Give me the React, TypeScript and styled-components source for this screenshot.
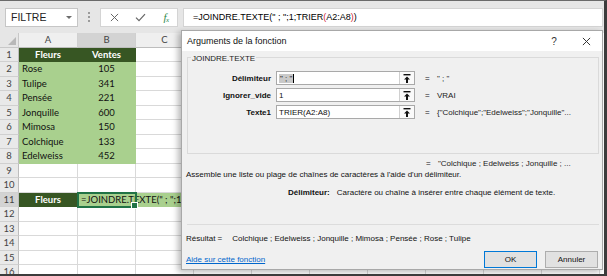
import React from 'react';
import styled, { createGlobalStyle } from 'styled-components';

const GlobalStyle = createGlobalStyle`
  * { box-sizing: border-box; }
  html, body { margin: 0; padding: 0; background: #3c3c3c; }
`;

const Ecran = styled.div`
  position: relative;
  width: 607px;
  height: 276px;
  overflow: hidden;
  background: #fff;
  border-top: 1px solid #6a6a6a;
  border-right: 3px solid #3c3c3c;
  border-bottom: 2px solid #3c3c3c;
`;

/* ---------- barre de formule ---------- */

const Barre = styled.div`
  display: flex;
  align-items: center;
  height: 32px;
  padding: 0 1px 0 5px;
  background: #e6e6e6;
  font-family: 'Liberation Sans', Arial, sans-serif;
`;

const NomBox = styled.div`
  display: flex;
  align-items: center;
  justify-content: space-between;
  width: 73px;
  height: 19px;
  padding: 0 5px 0 5px;
  background: #fff;
  border: 1px solid #c6c6c6;
  font-size: 10.5px;
  color: #222;
`;

const Triangle = styled.span`
  width: 0;
  height: 0;
  border-left: 3px solid transparent;
  border-right: 3px solid transparent;
  border-top: 3px solid #6d6d6d;
`;

const Points = styled.div`
  display: flex;
  flex-direction: column;
  align-items: center;
  gap: 2px;
  width: 22px;
`;

const Point = styled.span`
  width: 2px;
  height: 2px;
  background: #9b9b9b;
`;

const BoutonsBox = styled.div`
  display: grid;
  grid-template-columns: repeat(3, 26px);
  align-items: center;
  justify-items: center;
  width: 78px;
  height: 19px;
  background: #fff;
  border: 1px solid #d4d4d4;
`;

const Fx = styled.span`
  font-family: 'Liberation Serif', serif;
  font-style: italic;
  font-size: 11px;
  color: #2f8a4a;
  letter-spacing: -0.5px;

  sub {
    font-size: 7px;
    vertical-align: -1px;
  }
`;

const FormuleBox = styled.div`
  flex: 1;
  display: flex;
  align-items: center;
  height: 19px;
  margin-left: 5px;
  padding-left: 9px;
  background: #fff;
  border: 1px solid #d4d4d4;
  font-size: 9px;
  color: #000;
  white-space: nowrap;
`;

const Paren = styled.span`
  color: #d0273a;
`;

/* ---------- grille ---------- */

const Grille = styled.div`
  display: grid;
  grid-template-columns: 19px 59px 58px repeat(8, 58px);
  grid-auto-rows: 14.5px;
  font-family: Lato, 'Liberation Sans', sans-serif;
  font-size: 9.5px;
`;

const Coin = styled.div`
  position: relative;
  background: #e6e6e6;
  border-right: 1px solid #c8c8c8;
  border-bottom: 1px solid #c8c8c8;

  &::after {
    content: '';
    position: absolute;
    right: 2px;
    bottom: 2px;
    border-left: 8px solid transparent;
    border-bottom: 8px solid #b8b8b8;
  }
`;

const EnteteCol = styled.div<{ $sel?: boolean }>`
  display: flex;
  align-items: center;
  justify-content: center;
  background: ${p => (p.$sel ? '#d3d3d3' : '#efefef')};
  border-right: 1px solid #d0d0d0;
  border-bottom: 1px solid #bdbdbd;
  color: #444;
`;

const EnteteLigne = styled.div<{ $sel?: boolean }>`
  display: flex;
  align-items: center;
  justify-content: center;
  background: ${p => (p.$sel ? '#d3d3d3' : '#e9e9e9')};
  border-right: 1px solid #bdbdbd;
  border-bottom: 1px solid #d0d0d0;
  color: #444;
`;

const Cellule = styled.div<{ $fond?: string; $gras?: boolean; $centre?: boolean }>`
  display: flex;
  align-items: center;
  justify-content: ${p => (p.$centre ? 'center' : 'flex-start')};
  padding: 0 3px;
  background: ${p => p.$fond ?? '#fff'};
  border-right: 1px solid ${p => p.$fond ?? '#d9d9d9'};
  border-bottom: 1px solid ${p => p.$fond ?? '#d9d9d9'};
  font-weight: ${p => (p.$gras ? 700 : 400)};
  color: ${p => (p.$fond === VERT_FONCE ? '#fff' : '#111')};
  white-space: nowrap;
`;

const CelluleActive = styled(Cellule)`
  position: relative;
  z-index: 1;
  overflow: visible;
  outline: 2px solid #217346;
  outline-offset: -1px;

  &::after {
    content: '';
    position: absolute;
    right: -3px;
    bottom: -3px;
    width: 5px;
    height: 5px;
    background: #217346;
    border: 1px solid #fff;
  }
`;

/* ---------- boîte de dialogue ---------- */

const Dialogue = styled.div`
  position: absolute;
  left: 181px;
  top: 29px;
  width: 422px;
  height: 240px;
  display: flex;
  flex-direction: column;
  background: #f0f0f0;
  border: 1px solid #a8a8a8;
  box-shadow: -3px 2px 6px rgba(0, 0, 0, 0.28);
  font-family: 'Liberation Sans', Arial, sans-serif;
  font-size: 8px;
  color: #111;
  z-index: 5;
`;

const Titre = styled.div`
  display: flex;
  align-items: center;
  height: 20px;
  padding-left: 5px;
  background: #fff;
  font-size: 9px;
  color: #111;
`;

const TitreTexte = styled.span`
  flex: 1;
`;

const TitreBouton = styled.span`
  display: flex;
  align-items: center;
  justify-content: center;
  width: 32px;
  height: 20px;
  font-size: 10px;
  color: #333;
`;

const Groupe = styled.div`
  height: 97px;
  margin: 6px 3px 0 5px;
  border: 1px solid #dadada;
`;

const Legende = styled.div`
  width: fit-content;
  margin: -4px 0 0 3px;
  padding: 0 1px;
  line-height: 10px;
  background: #f0f0f0;
  font-size: 8px;
  color: #222;
`;

const Arguments = styled.div`
  display: flex;
  flex-direction: column;
  gap: 3px;
  margin-top: 7px;
`;

const Ligne = styled.div`
  display: flex;
  align-items: center;
  height: 14px;
`;

const Etiquette = styled.span`
  width: 83px;
  margin-right: 5px;
  text-align: right;
  font-weight: 700;
`;

const Champ = styled.div`
  display: flex;
  align-items: stretch;
  width: 139px;
  height: 14px;
  background: #fff;
  border: 1px solid #a9a9a9;
`;

const ChampTexte = styled.span`
  flex: 1;
  display: flex;
  align-items: center;
  padding-left: 2px;
  white-space: nowrap;
`;

const Selection = styled.span`
  background: #c9c9c9;
  padding: 0 1px;
`;

const Curseur = styled.span`
  width: 1px;
  height: 9px;
  background: #000;
`;

const BoutonReduire = styled.span`
  display: flex;
  align-items: center;
  justify-content: center;
  width: 15px;
  border-left: 1px solid #d0d0d0;
  background: #fafafa;
`;

const Egal = styled.span<{ $sansMarge?: boolean }>`
  width: 12px;
  margin-left: ${p => (p.$sansMarge ? 0 : 10)}px;
`;

const Valeur = styled.span`
  white-space: nowrap;
  color: #222;
`;

const LigneResultat = styled.div`
  display: flex;
  align-items: center;
  height: 11px;
  margin-top: 4px;
  padding-left: 244px;
  white-space: nowrap;
`;

const Description = styled.div`
  height: 11px;
  line-height: 11px;
  padding-left: 4px;
  white-space: nowrap;
`;

const AideArgument = styled.div`
  display: flex;
  align-items: center;
  gap: 7px;
  height: 11px;
  margin-top: 7px;
  padding-left: 106px;
  white-space: nowrap;

  b {
    font-weight: 700;
  }
`;

const Separateur = styled.div`
  margin: 26px 3px 0 5px;
  border-top: 1px solid #dcdcdc;
`;

const Resultat = styled.div`
  display: flex;
  align-items: center;
  gap: 10px;
  height: 11px;
  margin-top: 8px;
  padding-left: 4px;
  white-space: nowrap;
`;

const Pied = styled.div`
  display: flex;
  align-items: center;
  height: 18px;
  margin-top: 6px;
  padding: 0 4px 0 4px;
`;

const Lien = styled.a`
  flex: 1;
  color: #0066cc;
  text-decoration: underline;
`;

const Bouton = styled.button<{ $focus?: boolean }>`
  width: 53px;
  height: 17px;
  margin-left: 8px;
  padding: 0;
  background: #e1e1e1;
  border: 1px solid ${p => (p.$focus ? '#0078d7' : '#adadad')};
  font-family: inherit;
  font-size: 8px;
  color: #111;
`;

const VERT_FONCE = '#375623';
const VERT_CLAIR = '#a9d08e';

const donnees: [string, string][] = [
  ['Rose', '105'],
  ['Tulipe', '341'],
  ['Pensée', '221'],
  ['Jonquille', '600'],
  ['Mimosa', '150'],
  ['Colchique', '133'],
  ['Edelweiss', '452'],
];

// only A-C are visible; the other columns sit under the dialog
const colonnes = ['A', 'B', 'C', '', '', '', '', '', '', ''];

function IconeReduire() {
  return (
    <svg width="8" height="9" viewBox="0 0 8 9">
      <rect x="0.5" y="0" width="7" height="1.4" fill="#111" />
      <path d="M4 2.4 L1 5.4 H3 V9 H5 V5.4 H7 Z" fill="#111" />
    </svg>
  );
}

function Croix({ taille, couleur }: { taille: number; couleur: string }) {
  return (
    <svg width={taille} height={taille} viewBox="0 0 10 10">
      <path d="M1 1 L9 9 M9 1 L1 9" stroke={couleur} strokeWidth="1.1" fill="none" />
    </svg>
  );
}

function Coche() {
  return (
    <svg width="11" height="9" viewBox="0 0 11 9">
      <path d="M1 4.6 L4 7.6 L10 1.2" stroke="#666" strokeWidth="1.2" fill="none" />
    </svg>
  );
}

function Feuille() {
  const lignes = [];
  for (let n = 1; n <= 16; n++) {
    const cellules = [];
    if (n === 1) {
      cellules.push(<Cellule key="a" $fond={VERT_FONCE} $gras $centre>Fleurs</Cellule>);
      cellules.push(<Cellule key="b" $fond={VERT_FONCE} $gras $centre>Ventes</Cellule>);
    } else if (n <= 8) {
      const [fleur, vente] = donnees[n - 2];
      cellules.push(<Cellule key="a" $fond={VERT_CLAIR}>{fleur}</Cellule>);
      cellules.push(<Cellule key="b" $fond={VERT_CLAIR} $centre>{vente}</Cellule>);
    } else if (n === 11) {
      cellules.push(<Cellule key="a" $fond={VERT_FONCE} $gras $centre>Fleurs</Cellule>);
      cellules.push(
        <CelluleActive key="b" $fond={VERT_CLAIR}>=JOINDRE.TEXTE(" ; ";1;</CelluleActive>
      );
    } else {
      cellules.push(<Cellule key="a" />);
      cellules.push(<Cellule key="b" />);
    }
    for (let c = 2; c < colonnes.length; c++) {
      cellules.push(<Cellule key={c} $fond={n === 11 && c === 2 ? VERT_CLAIR : undefined} />);
    }
    lignes.push(
      <React.Fragment key={n}>
        <EnteteLigne $sel={n === 11}>{n}</EnteteLigne>
        {cellules}
      </React.Fragment>
    );
  }

  return (
    <Grille>
      <Coin />
      {colonnes.map((c, i) => (
        <EnteteCol key={i} $sel={c === 'B'}>{c}</EnteteCol>
      ))}
      {lignes}
    </Grille>
  );
}

function ArgumentsFonction() {
  return (
    <Dialogue>
      <Titre>
        <TitreTexte>Arguments de la fonction</TitreTexte>
        <TitreBouton>?</TitreBouton>
        <TitreBouton><Croix taille={9} couleur="#333" /></TitreBouton>
      </Titre>

      <Groupe>
        <Legende>JOINDRE.TEXTE</Legende>
        <Arguments>
          <Ligne>
            <Etiquette>Délimiteur</Etiquette>
            <Champ>
              <ChampTexte><Selection>" ; "</Selection><Curseur /></ChampTexte>
              <BoutonReduire><IconeReduire /></BoutonReduire>
            </Champ>
            <Egal>=</Egal>
            <Valeur>" ; "</Valeur>
          </Ligne>
          <Ligne>
            <Etiquette>Ignorer_vide</Etiquette>
            <Champ>
              <ChampTexte>1</ChampTexte>
              <BoutonReduire><IconeReduire /></BoutonReduire>
            </Champ>
            <Egal>=</Egal>
            <Valeur>VRAI</Valeur>
          </Ligne>
          <Ligne>
            <Etiquette>Texte1</Etiquette>
            <Champ>
              <ChampTexte>TRIER(A2:A8)</ChampTexte>
              <BoutonReduire><IconeReduire /></BoutonReduire>
            </Champ>
            <Egal>=</Egal>
            <Valeur>{'{"Colchique";"Edelweiss";"Jonquille"...'}</Valeur>
          </Ligne>
        </Arguments>
      </Groupe>

      <LigneResultat>
        <Egal $sansMarge>=</Egal>
        <Valeur>"Colchique ; Edelweiss ; Jonquille ; ...</Valeur>
      </LigneResultat>
      <Description>Assemble une liste ou plage de chaînes de caractères à l'aide d'un délimiteur.</Description>
      <AideArgument>
        <b>Délimiteur:</b>
        <span>Caractère ou chaîne à insérer entre chaque élément de texte.</span>
      </AideArgument>

      <Separateur />

      <Resultat>
        <span>Résultat =</span>
        <span>Colchique ; Edelweiss ; Jonquille ; Mimosa ; Pensée ; Rose ; Tulipe</span>
      </Resultat>

      <Pied>
        <Lien>Aide sur cette fonction</Lien>
        <Bouton $focus>OK</Bouton>
        <Bouton>Annuler</Bouton>
      </Pied>
    </Dialogue>
  );
}

export default function App() {
  return (
    <>
      <GlobalStyle />
      <Ecran>
        <Barre>
          <NomBox>
            FILTRE
            <Triangle />
          </NomBox>
          <Points>
            <Point />
            <Point />
            <Point />
          </Points>
          <BoutonsBox>
            <Croix taille={9} couleur="#666" />
            <Coche />
            <Fx>f<sub>x</sub></Fx>
          </BoutonsBox>
          <FormuleBox>
            =JOINDRE.TEXTE(" ; ";1;TRIER<Paren>(</Paren>A2:A8<Paren>)</Paren>)
          </FormuleBox>
        </Barre>
        <Feuille />
        <ArgumentsFonction />
      </Ecran>
    </>
  );
}
